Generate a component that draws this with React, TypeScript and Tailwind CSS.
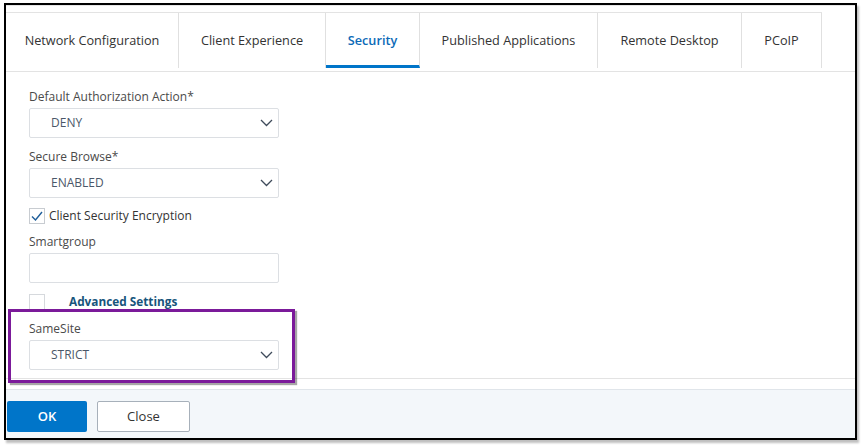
import React from 'react';

const font = { fontFamily: '"Open Sans", "Noto Sans", sans-serif' };

const tabs = [
  { label: 'Network Configuration', w: 'w-[173px]' },
  { label: 'Client Experience', w: 'w-[147px]' },
  { label: 'Security', w: 'w-[94px]', active: true },
  { label: 'Published Applications', w: 'w-[178px]' },
  { label: 'Remote Desktop', w: 'w-[144px]' },
  { label: 'PCoIP', w: 'w-[80px]' },
];

const Chevron = () => (
  <svg width="13" height="8" viewBox="0 0 13 8" fill="none">
    <path d="M1 1l5.5 5.5L12 1" stroke="#3f4b5b" strokeWidth="1.3" />
  </svg>
);

const Select = ({ value }: { value: string }) => (
  <div className="flex h-[30px] w-[250px] items-center justify-between rounded-[2px] border border-[#dcdfe3] bg-white pl-[21px] pr-[5px]">
    <span className="text-[12px] text-[#4b5769]">{value}</span>
    <Chevron />
  </div>
);

const Label = ({ children }: { children: React.ReactNode }) => (
  <div className="mb-[3px] text-[12px] leading-[16px] text-[#4a4a4a]">{children}</div>
);

export default function App() {
  return (
    <div className="h-[448px] w-[861px] bg-white pl-[4px] pt-[3px]" style={font}>
      <div className="relative flex h-[437px] w-[853px] flex-col border-2 border-black bg-white shadow-[2px_3px_2px_rgba(0,0,0,0.25)]">
        <div className="h-[7px] border-t border-[#e6e6e6]" />
        <div className="flex h-[60px] border-b border-[#e3e3e3]">
          <div className="flex h-[56px] border-t border-[#e3e3e3]">
            {tabs.map((t) => (
              <div
                key={t.label}
                className={`${t.w} flex items-center justify-center border-r border-[#e0e0e0] text-[12.7px] ${
                  t.active
                    ? 'border-b-[3px] border-b-[#0075c9] pt-[3px] font-semibold text-[#0b6ab7]'
                    : 'text-[#333]'
                }`}
              >
                {t.label}
              </div>
            ))}
          </div>
        </div>

        <div className="flex-1 pl-[23px] pt-[17px]">
          <Label>Default Authorization Action*</Label>
          <Select value="DENY" />
          <div className="mt-[11px]">
            <Label>Secure Browse*</Label>
            <Select value="ENABLED" />
          </div>
          <div className="mt-[9px] flex items-center gap-[4px]">
            <div className="flex h-[16px] w-[16px] items-center justify-center border border-[#c8ccd1] bg-white">
              <svg width="12" height="10" viewBox="0 0 12 10" fill="none">
                <path d="M1 5.5l3.5 3.5L11 1" stroke="#1f5e9a" strokeWidth="1.4" />
              </svg>
            </div>
            <span className="text-[12px] text-[#333]">Client Security Encryption</span>
          </div>
          <div className="mt-[9px]">
            <Label>Smartgroup</Label>
            <div className="h-[30px] w-[250px] rounded-[2px] border border-[#dcdfe3] bg-white" />
          </div>
          <div className="mt-[11px] flex h-[16px] items-center">
            <div className="h-[16px] w-[16px] border border-[#d6d9dd] bg-white" />
            <span className="ml-[24px] text-[11.8px] font-bold text-[#17557c]">Advanced Settings</span>
          </div>
          <div className="mt-[11px]">
            <Label>SameSite</Label>
            <Select value="STRICT" />
          </div>
        </div>

        <div className="h-[11px] border-t border-[#e3e3e3]" />
        <div className="flex h-[49px] gap-[10px] border-t border-[#e0e5ea] bg-[#f3f7fa] pl-[1px] pt-[11px]">
          <div className="flex h-[31px] w-[80px] items-center justify-center rounded-[2px] bg-[#0075c9] text-[13px] font-semibold text-white">
            OK
          </div>
          <div className="flex h-[31px] w-[93px] items-center justify-center rounded-[2px] border border-[#a7b0ba] bg-white text-[13px] text-[#333]">
            Close
          </div>
        </div>

        <div className="pointer-events-none absolute left-[2px] top-[304px] h-[74px] w-[287px] border-[3px] border-[#7b1a9a] shadow-[2px_2px_1px_rgba(0,0,0,0.35)]" />
      </div>
    </div>
  );
}
